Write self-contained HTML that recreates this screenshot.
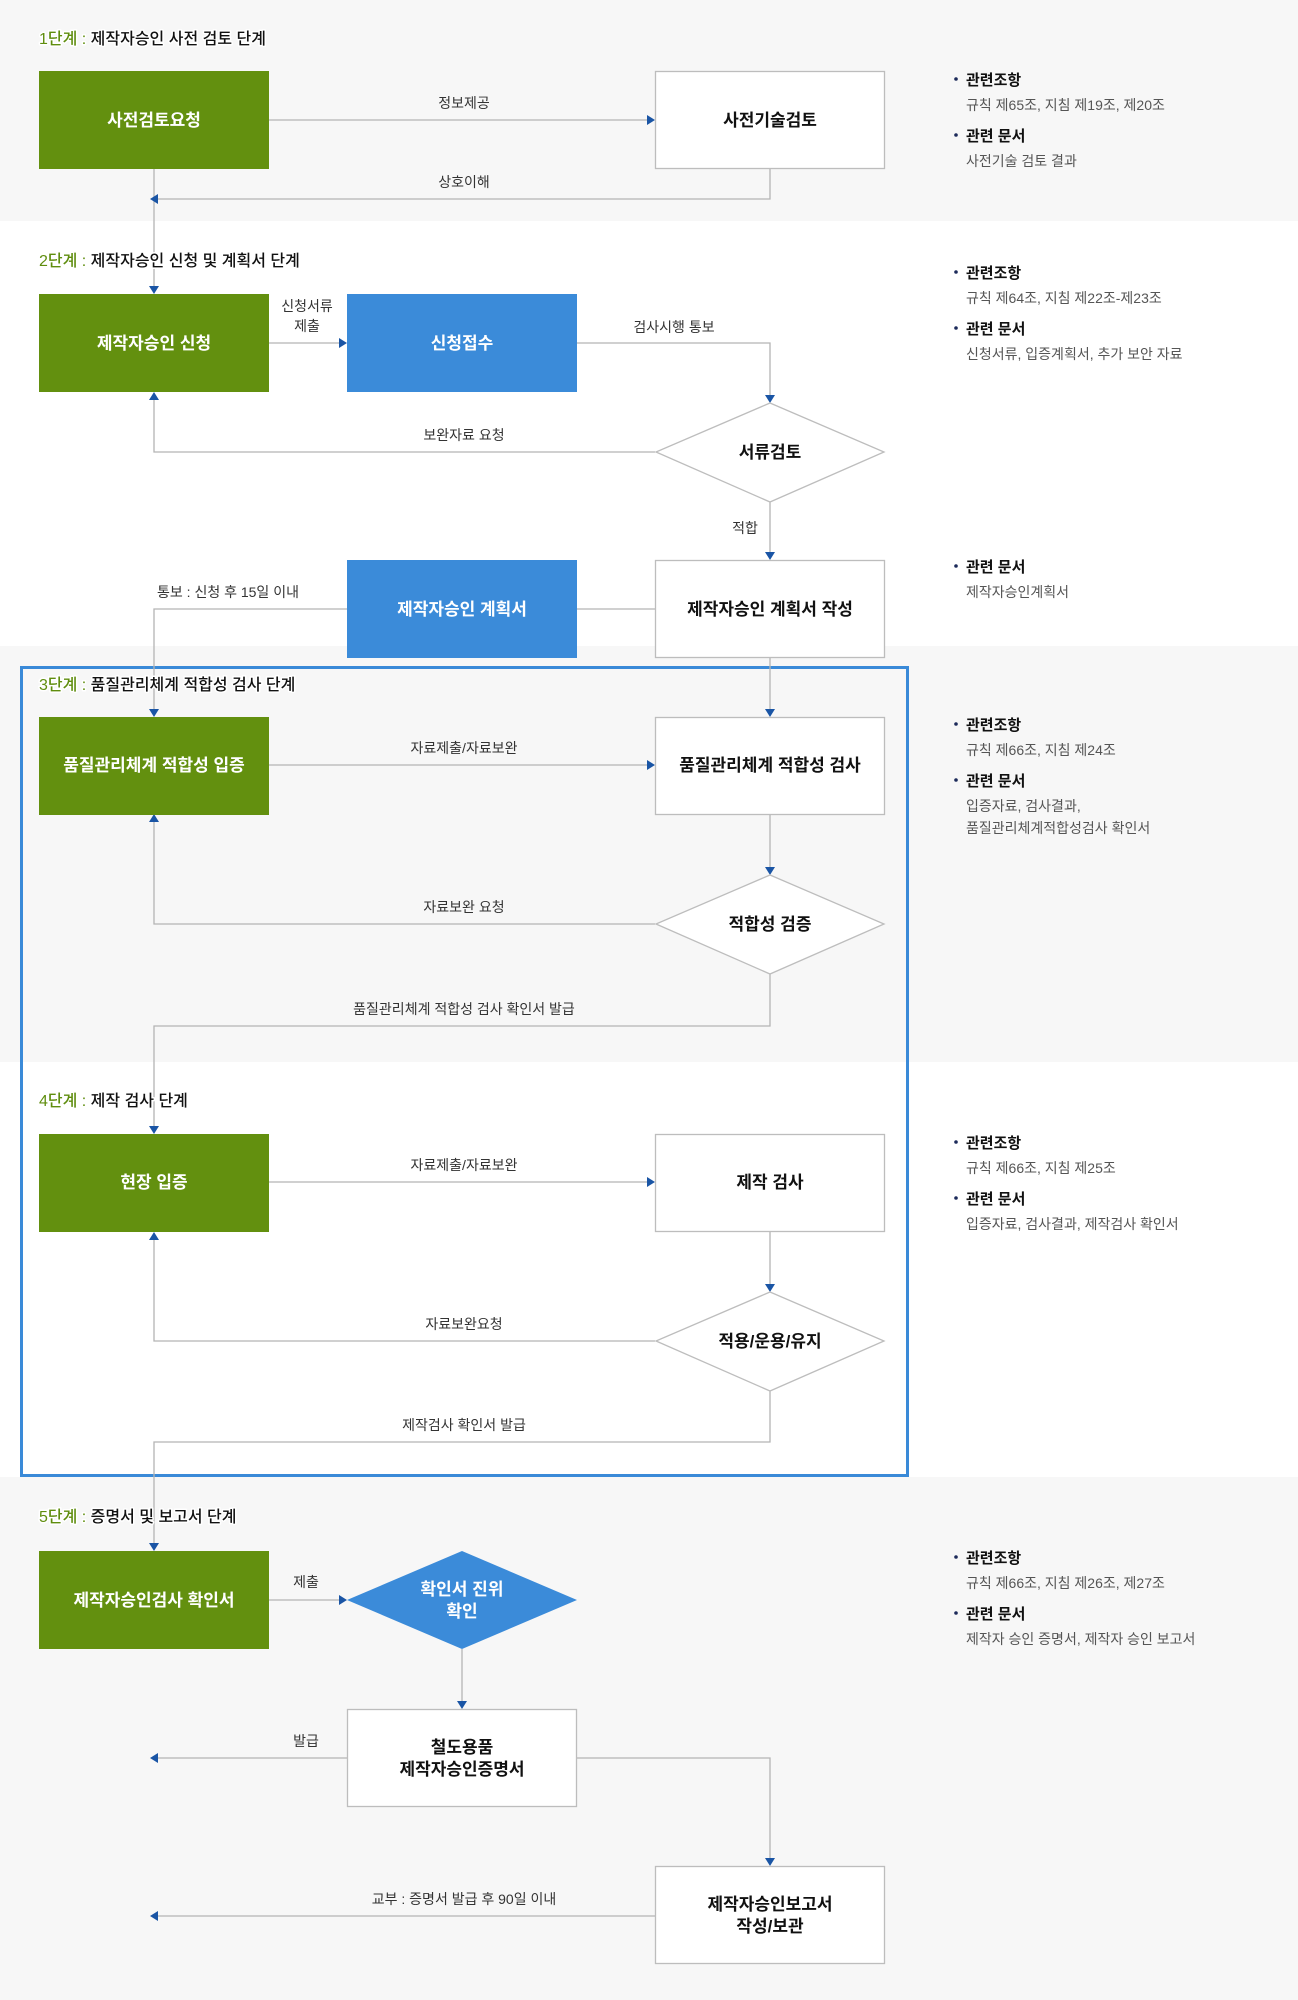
<!DOCTYPE html>
<html><head><meta charset="utf-8"><style>
html,body{margin:0;padding:0;background:#fff}
svg{display:block}
text{font-family:"Liberation Sans","Noto Sans CJK KR",sans-serif}
.lbl{font-size:14px;fill:#333;text-anchor:middle}
.bw{font-size:17px;fill:#fff;font-weight:bold;text-anchor:middle}
.bk{font-size:17px;fill:#111;font-weight:bold;text-anchor:middle}
.st{font-size:16px;fill:#111;font-weight:500;stroke:#fff;stroke-width:3px;paint-order:stroke;stroke-linejoin:round}
.stg{fill:#5f8d0e}
.ih{font-size:15px;fill:#111;font-weight:bold}
.id{font-size:14px;fill:#555}
.ln{stroke:#b4b4b4;stroke-width:1.3;fill:none}
.bx{fill:#fff;stroke:#bdbdbd;stroke-width:1.3}
.ar{fill:#1a55a5}
</style></head><body>
<svg width="1298" height="2000" viewBox="0 0 1298 2000" xmlns="http://www.w3.org/2000/svg">
<defs>
<path id="ad" d="M-5,-8 L5,-8 L0,0 Z"/>
<path id="au" d="M-5,8 L5,8 L0,0 Z"/>
<path id="ar" d="M-8,-5 L-8,5 L0,0 Z"/>
<path id="al" d="M8,-5 L8,5 L0,0 Z"/>
</defs>
<rect x="0" y="0" width="1298" height="221" fill="#f7f7f7"/>
<rect x="0" y="646" width="1298" height="416" fill="#f7f7f7"/>
<rect x="0" y="1477" width="1298" height="523" fill="#f7f7f7"/>
<rect x="21.5" y="667.5" width="886" height="808" fill="none" stroke="#3a8ad8" stroke-width="3"/>

<path class="ln" d="M269,120 H650"/>
<path class="ln" d="M770,169 V199 H158"/>
<path class="ln" d="M154,169 V288"/>
<path class="ln" d="M269,343 H342"/>
<path class="ln" d="M577,343 H770 V398"/>
<path class="ln" d="M655,452 H154 V398"/>
<path class="ln" d="M770,502 V554"/>
<path class="ln" d="M577,609 H655"/>
<path class="ln" d="M347,609 H154 V711"/>
<path class="ln" d="M770,658 V711"/>
<path class="ln" d="M269,765 H650"/>
<path class="ln" d="M770,814 V869"/>
<path class="ln" d="M655,924 H154 V820"/>
<path class="ln" d="M770,974 V1026 H154 V1128"/>
<path class="ln" d="M269,1182 H650"/>
<path class="ln" d="M770,1232 V1286"/>
<path class="ln" d="M655,1341 H154 V1238"/>
<path class="ln" d="M770,1391 V1442 H154 V1545"/>
<path class="ln" d="M269,1600 H342"/>
<path class="ln" d="M462,1649 V1703"/>
<path class="ln" d="M347,1758 H158"/>
<path class="ln" d="M577,1758 H770 V1860"/>
<path class="ln" d="M655,1916 H158"/>

<text class="st" x="39" y="44"><tspan class="stg">1단계 :</tspan> 제작자승인 사전 검토 단계</text>
<text class="st" x="39" y="266"><tspan class="stg">2단계 :</tspan> 제작자승인 신청 및 계획서 단계</text>
<text class="st" x="39" y="690"><tspan class="stg">3단계 :</tspan> 품질관리체계 적합성 검사 단계</text>
<text class="st" x="39" y="1106"><tspan class="stg">4단계 :</tspan> 제작 검사 단계</text>
<text class="st" x="39" y="1522"><tspan class="stg">5단계 :</tspan> 증명서 및 보고서 단계</text>

<use href="#ar" class="ar" x="655" y="120"/>
<use href="#al" class="ar" x="150" y="199"/>
<use href="#ad" class="ar" x="154" y="294"/>
<use href="#ar" class="ar" x="347" y="343"/>
<use href="#ad" class="ar" x="770" y="403"/>
<use href="#au" class="ar" x="154" y="392"/>
<use href="#ad" class="ar" x="770" y="560"/>
<use href="#ad" class="ar" x="154" y="717"/>
<use href="#ad" class="ar" x="770" y="717"/>
<use href="#ar" class="ar" x="655" y="765"/>
<use href="#ad" class="ar" x="770" y="875"/>
<use href="#au" class="ar" x="154" y="814"/>
<use href="#ad" class="ar" x="154" y="1134"/>
<use href="#ar" class="ar" x="655" y="1182"/>
<use href="#ad" class="ar" x="770" y="1292"/>
<use href="#au" class="ar" x="154" y="1232"/>
<use href="#ad" class="ar" x="154" y="1551"/>
<use href="#ar" class="ar" x="347" y="1600"/>
<use href="#ad" class="ar" x="462" y="1709"/>
<use href="#al" class="ar" x="150" y="1758"/>
<use href="#ad" class="ar" x="770" y="1866"/>
<use href="#al" class="ar" x="150" y="1916"/>

<rect x="39" y="71" width="230" height="98" fill="#63900f"/>
<text class="bw" x="154" y="126">사전검토요청</text>
<rect class="bx" x="655.5" y="71.5" width="229" height="97"/>
<text class="bk" x="770" y="126">사전기술검토</text>
<text class="lbl" x="464" y="108">정보제공</text>
<text class="lbl" x="464" y="187">상호이해</text>

<rect x="39" y="294" width="230" height="98" fill="#63900f"/>
<text class="bw" x="154" y="349">제작자승인 신청</text>
<rect x="347" y="294" width="230" height="98" fill="#3b8bd9"/>
<text class="bw" x="462" y="349">신청접수</text>
<text class="lbl" x="307" y="311">신청서류</text>
<text class="lbl" x="307" y="331">제출</text>
<text class="lbl" x="674" y="332">검사시행 통보</text>
<polygon class="bx" points="770,403 884,452 770,502 656,452"/>
<text class="bk" x="770" y="458">서류검토</text>
<text class="lbl" x="464" y="440">보완자료 요청</text>
<text class="lbl" x="745" y="533">적합</text>

<rect x="347" y="560" width="230" height="98" fill="#3b8bd9"/>
<text class="bw" x="462" y="615">제작자승인 계획서</text>
<rect class="bx" x="655.5" y="560.5" width="229" height="97"/>
<text class="bk" x="770" y="615">제작자승인 계획서 작성</text>
<text class="lbl" x="228" y="597">통보 : 신청 후 15일 이내</text>

<rect x="39" y="717" width="230" height="98" fill="#63900f"/>
<text class="bw" x="154" y="771">품질관리체계 적합성 입증</text>
<rect class="bx" x="655.5" y="717.5" width="229" height="97"/>
<text class="bk" x="770" y="771">품질관리체계 적합성 검사</text>
<text class="lbl" x="464" y="753">자료제출/자료보완</text>
<polygon class="bx" points="770,875 884,924 770,974 656,924"/>
<text class="bk" x="770" y="930">적합성 검증</text>
<text class="lbl" x="464" y="912">자료보완 요청</text>
<text class="lbl" x="464" y="1014">품질관리체계 적합성 검사 확인서 발급</text>

<rect x="39" y="1134" width="230" height="98" fill="#63900f"/>
<text class="bw" x="154" y="1188">현장 입증</text>
<rect class="bx" x="655.5" y="1134.5" width="229" height="97"/>
<text class="bk" x="770" y="1188">제작 검사</text>
<text class="lbl" x="464" y="1170">자료제출/자료보완</text>
<polygon class="bx" points="770,1292 884,1341 770,1391 656,1341"/>
<text class="bk" x="770" y="1347">적용/운용/유지</text>
<text class="lbl" x="464" y="1329">자료보완요청</text>
<text class="lbl" x="464" y="1430">제작검사 확인서 발급</text>

<rect x="39" y="1551" width="230" height="98" fill="#63900f"/>
<text class="bw" x="154" y="1606">제작자승인검사 확인서</text>
<polygon points="462,1551 577,1600 462,1649 347,1600" fill="#3b8bd9"/>
<text class="bw" x="462" y="1595">확인서 진위</text>
<text class="bw" x="462" y="1617">확인</text>
<text class="lbl" x="306" y="1587">제출</text>
<rect class="bx" x="347.5" y="1709.5" width="229" height="97"/>
<text class="bk" x="462" y="1753">철도용품</text>
<text class="bk" x="462" y="1775">제작자승인증명서</text>
<text class="lbl" x="306" y="1746">발급</text>
<rect class="bx" x="655.5" y="1866.5" width="229" height="97"/>
<text class="bk" x="770" y="1910">제작자승인보고서</text>
<text class="bk" x="770" y="1932">작성/보관</text>
<text class="lbl" x="464" y="1904">교부 : 증명서 발급 후 90일 이내</text>

<g>
<circle cx="956" cy="79" r="1.8" fill="#1c2a5a"/><text class="ih" x="966" y="85">관련조항</text>
<text class="id" x="966" y="110">규칙 제65조, 지침 제19조, 제20조</text>
<circle cx="956" cy="135" r="1.8" fill="#1c2a5a"/><text class="ih" x="966" y="141">관련 문서</text>
<text class="id" x="966" y="166">사전기술 검토 결과</text>

<circle cx="956" cy="272" r="1.8" fill="#1c2a5a"/><text class="ih" x="966" y="278">관련조항</text>
<text class="id" x="966" y="303">규칙 제64조, 지침 제22조-제23조</text>
<circle cx="956" cy="328" r="1.8" fill="#1c2a5a"/><text class="ih" x="966" y="334">관련 문서</text>
<text class="id" x="966" y="359">신청서류, 입증계획서, 추가 보안 자료</text>

<circle cx="956" cy="566" r="1.8" fill="#1c2a5a"/><text class="ih" x="966" y="572">관련 문서</text>
<text class="id" x="966" y="597">제작자승인계획서</text>

<circle cx="956" cy="724" r="1.8" fill="#1c2a5a"/><text class="ih" x="966" y="730">관련조항</text>
<text class="id" x="966" y="755">규칙 제66조, 지침 제24조</text>
<circle cx="956" cy="780" r="1.8" fill="#1c2a5a"/><text class="ih" x="966" y="786">관련 문서</text>
<text class="id" x="966" y="811">입증자료, 검사결과,</text>
<text class="id" x="966" y="833">품질관리체계적합성검사 확인서</text>

<circle cx="956" cy="1142" r="1.8" fill="#1c2a5a"/><text class="ih" x="966" y="1148">관련조항</text>
<text class="id" x="966" y="1173">규칙 제66조, 지침 제25조</text>
<circle cx="956" cy="1198" r="1.8" fill="#1c2a5a"/><text class="ih" x="966" y="1204">관련 문서</text>
<text class="id" x="966" y="1229">입증자료, 검사결과, 제작검사 확인서</text>

<circle cx="956" cy="1557" r="1.8" fill="#1c2a5a"/><text class="ih" x="966" y="1563">관련조항</text>
<text class="id" x="966" y="1588">규칙 제66조, 지침 제26조, 제27조</text>
<circle cx="956" cy="1613" r="1.8" fill="#1c2a5a"/><text class="ih" x="966" y="1619">관련 문서</text>
<text class="id" x="966" y="1644">제작자 승인 증명서, 제작자 승인 보고서</text>
</g>
</svg>
</body></html>
